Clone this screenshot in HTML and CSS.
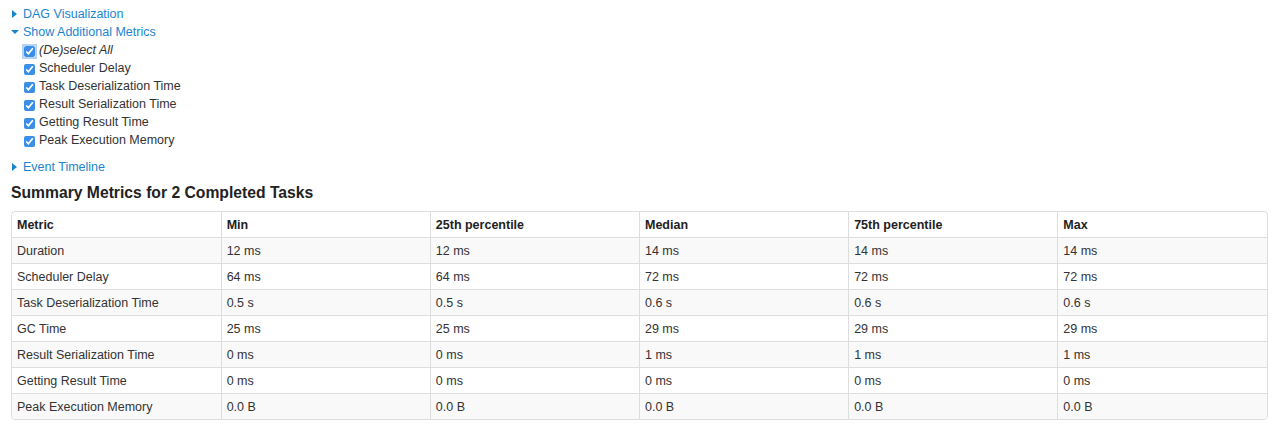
FILE: index.html
```html
<!DOCTYPE html>
<html>
<head>
<meta charset="utf-8">
<link rel="stylesheet" href="styles.css">
</head>
<body>
<div class="page">
  <div class="toggle"><span class="arrow-right"></span><a href="#">DAG Visualization</a></div>
  <div class="toggle"><span class="arrow-down"></span><a href="#">Show Additional Metrics</a></div>
  <ul class="checks">
    <li><input type="checkbox" class="cb focused" checked><span class="italic">(De)select All</span></li>
    <li><input type="checkbox" class="cb" checked><span>Scheduler Delay</span></li>
    <li><input type="checkbox" class="cb" checked><span>Task Deserialization Time</span></li>
    <li><input type="checkbox" class="cb" checked><span>Result Serialization Time</span></li>
    <li><input type="checkbox" class="cb" checked><span>Getting Result Time</span></li>
    <li><input type="checkbox" class="cb" checked><span>Peak Execution Memory</span></li>
  </ul>
  <div class="toggle timeline"><span class="arrow-right"></span><a href="#">Event Timeline</a></div>
  <h4 class="title">Summary Metrics for 2 Completed Tasks</h4>
  <div class="table-wrap">
    <table class="metrics">
      <thead>
        <tr><th>Metric</th><th>Min</th><th>25th percentile</th><th>Median</th><th>75th percentile</th><th>Max</th></tr>
      </thead>
      <tbody>
        <tr><td>Duration</td><td>12 ms</td><td>12 ms</td><td>14 ms</td><td>14 ms</td><td>14 ms</td></tr>
        <tr><td>Scheduler Delay</td><td>64 ms</td><td>64 ms</td><td>72 ms</td><td>72 ms</td><td>72 ms</td></tr>
        <tr><td>Task Deserialization Time</td><td>0.5 s</td><td>0.5 s</td><td>0.6 s</td><td>0.6 s</td><td>0.6 s</td></tr>
        <tr><td>GC Time</td><td>25 ms</td><td>25 ms</td><td>29 ms</td><td>29 ms</td><td>29 ms</td></tr>
        <tr><td>Result Serialization Time</td><td>0 ms</td><td>0 ms</td><td>1 ms</td><td>1 ms</td><td>1 ms</td></tr>
        <tr><td>Getting Result Time</td><td>0 ms</td><td>0 ms</td><td>0 ms</td><td>0 ms</td><td>0 ms</td></tr>
        <tr><td>Peak Execution Memory</td><td>0.0 B</td><td>0.0 B</td><td>0.0 B</td><td>0.0 B</td><td>0.0 B</td></tr>
      </tbody>
    </table>
  </div>
</div>
</body>
</html>
```
FILE: styles.css
```css
html, body {
  margin: 0;
  padding: 0;
  background: #fff;
}
body {
  font-family: "Liberation Sans", Arial, sans-serif;
  font-size: 12.5px;
  color: #333;
}
.page {
  padding: 5px 12px 0 11px;
}
.toggle {
  line-height: 18px;
  height: 18px;
  display: flex;
  align-items: center;
}
.toggle a {
  color: #1a85cf;
  text-decoration: none;
}
.arrow-right {
  width: 0;
  height: 0;
  border-top: 4px solid transparent;
  border-bottom: 4px solid transparent;
  border-left: 5px solid #1a85cf;
  margin-left: 1px;
  margin-right: 6px;
}
.arrow-down {
  width: 0;
  height: 0;
  border-left: 4px solid transparent;
  border-right: 4px solid transparent;
  border-top: 4px solid #1a85cf;
  margin-right: 4px;
}
.checks {
  list-style: none;
  margin: 0;
  padding: 0 0 0 13px;
}
.checks li {
  height: 18px;
  line-height: 18px;
  display: flex;
  align-items: center;
}
.cb {
  width: 11px;
  height: 11px;
  margin: 2px 4px 0 0;
  accent-color: #3a8ee6;
}
.cb.focused {
  box-shadow: 0 0 0 2px rgba(90, 160, 235, 0.45);
  border-radius: 3px;
}
.italic {
  font-style: italic;
}
.timeline {
  margin-top: 9px;
}
.title {
  margin: 7px 0 0 0;
  font-size: 15.7px;
  line-height: 20px;
  font-weight: bold;
  color: #222;
}
.table-wrap {
  margin-top: 8px;
  border: 1px solid #ddd;
  border-radius: 4px;
  overflow: hidden;
}
.metrics {
  width: 100%;
  table-layout: fixed;
  border-collapse: collapse;
  border-spacing: 0;
}
.metrics th,
.metrics td {
  padding: 5px 5px 3px 5px;
  line-height: 17px;
  text-align: left;
  border-left: 1px solid #ddd;
  border-top: 1px solid #ddd;
  font-size: 12.5px;
}
.metrics th {
  font-weight: bold;
  color: #222;
}
.metrics thead tr:first-child th {
  border-top: 0;
}
.metrics th:first-child,
.metrics td:first-child {
  border-left: 0;
}
.metrics tbody tr:nth-child(odd) td {
  background: #f9f9f9;
}
```
